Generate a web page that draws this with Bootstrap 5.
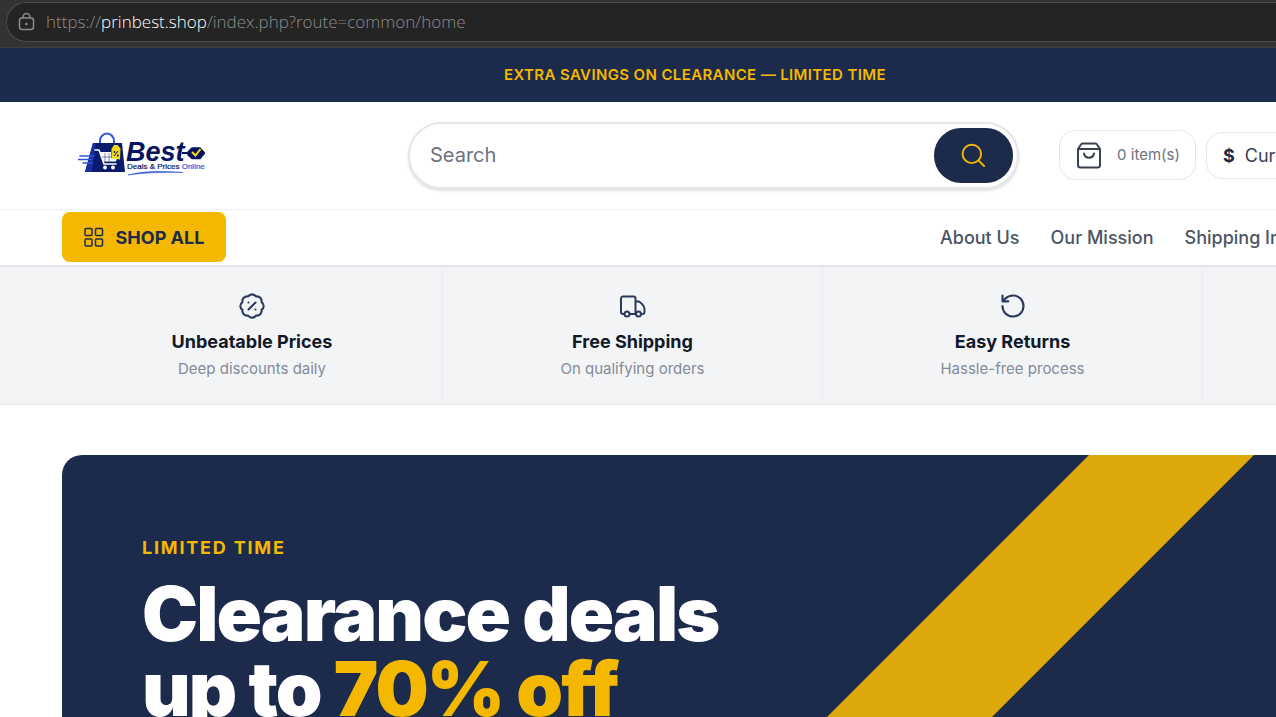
<!DOCTYPE html>
<html lang="en">
<head>
<meta charset="utf-8">
<meta name="viewport" content="width=device-width, initial-scale=1">
<title>Best Deals &amp; Prices Online</title>
<link href="https://cdn.jsdelivr.net/npm/bootstrap@5.3.0/dist/css/bootstrap.min.css" rel="stylesheet">
<style>
:root { --navy: #1c2b4b; --gold: #f5b800; --line: #e5e7eb; --gutter: 62px; }
body { font-family: Inter, "Liberation Sans", sans-serif; color: #374151; }
svg { display: block; flex: none; }
.ico { fill: none; stroke: currentColor; stroke-width: 2; stroke-linecap: round; stroke-linejoin: round; }

.browser-bar { background: #333; border-bottom: 1px solid #3f3f3f; padding: 2px 0 5px 6px; }
.address { height: 40px; background: #242424; border: 1px solid #4c4c4c; border-right: 0; border-radius: 20px 0 0 20px; padding-left: 10px; gap: 11px; color: #8c8c8c; font: 300 17px/24px "Open Sans", sans-serif; }
.address strong { font-weight: 300; color: #fff; }

.promo { background: var(--navy); color: var(--gold); font-size: 15px; font-weight: 600; line-height: 24px; letter-spacing: .025em; padding: 15px 0 15px 114px; }

.masthead { height: 108px; padding: 0 0 1px var(--gutter); border-bottom: 1px solid #f1f2f4; }
.search-box { width: calc(50% + 4px); min-width: 300px; height: 67px; border: 2px solid var(--line); border-radius: 34px; box-shadow: 0 2px 3px rgba(0,0,0,.13); padding: 4px; margin-left: 200px; margin-right: 40px; }
.search-box .form-control { font-size: 20px; color: #374151; padding: 0 16px; }
.search-box .form-control::placeholder { color: #6b7280; opacity: 1; }
.search-btn { width: 79px; background: var(--navy); color: var(--gold); border-radius: 27px; }
.pill { background: #fff; border: 1px solid var(--line); border-radius: 16px; }
.cart-btn { width: 137px; height: 50px; font-size: 15px; color: #6b7280; padding: 0 14px; gap: 12px; margin-right: 10px; }
.cart-btn svg { color: #374151; }
.currency-btn { height: 47px; font-size: 18px; color: #374151; padding: 0 16px; gap: 10px; }
.currency-btn b { color: var(--navy); }

.menu-row { height: 57px; padding: 0 0 2px var(--gutter); border-bottom: 2px solid #e4e5e8; }
.shop-btn { width: 164px; height: 50px; background: var(--gold); color: var(--navy); font-size: 18px; font-weight: 700; border-radius: 8px; gap: 10px; padding: 2px 0 0; margin-right: 714px; }
.menu-row .nav-link { color: #4b5563; font-size: 18px; font-weight: 500; padding: 0; }
.menu-row .nav { gap: 31px; padding-top: 2px; }

.benefits { background: #f3f4f6; border-bottom: 1px solid var(--line); padding-left: var(--gutter); }
.benefit { flex: 0 0 381px; height: 137px; padding-top: 25px; border-right: 1px solid #e9ebee; }
.benefit + .benefit { flex-basis: 380px; }
.benefit svg { color: #2b3a5a; margin-bottom: 8px; }
.benefit h2 { font-size: 18px; line-height: 28px; font-weight: 700; color: #111827; margin: 0; }
.benefit p { font-size: 15px; line-height: 26px; color: #858b98; margin: 0; }

.hero { background: var(--navy); margin: 50px 0 0 var(--gutter); padding: 80px 80px 0; border-radius: 20px 0 0 0; min-height: 0; }
.hero-stripe { right: 22px; width: 165px; background: #dda80a; transform: skewX(-45deg); transform-origin: top left; }
.eyebrow { color: var(--gold); font-size: 18px; line-height: 26px; font-weight: 700; letter-spacing: .1em; margin-bottom: 15px; }
.hero h1 { color: #fff; font-size: 75px; line-height: 75px; font-weight: 900; letter-spacing: -.025em; margin: 0; }
.hero h1 span { color: var(--gold); }
</style>
</head>
<body class="vh-100 overflow-hidden bg-white d-flex flex-column">
<div class="browser-bar">
  <div class="address d-flex align-items-center text-nowrap">
    <svg width="18" height="20" viewBox="0 0 18 20" fill="none" stroke="currentColor" stroke-width="1.5"><rect x="2.5" y="6" width="14" height="11.5" rx="2.5"/><path d="M6 6V5a3.5 3.5 0 0 1 7 0v1"/><circle cx="9.500" cy="12" r=".6" fill="currentColor"/></svg>
    <div>https://<strong>prinbest.shop</strong>/index.php?route=common/home</div>
  </div>
</div>

<div class="promo text-center text-nowrap">EXTRA SAVINGS ON CLEARANCE — LIMITED TIME</div>

<header class="masthead d-flex align-items-center text-nowrap overflow-hidden flex-shrink-0">
  <a href="#" class="ms-3 flex-shrink-0" aria-label="Best Deals and Prices Online">
    <svg width="130" height="46" viewBox="0 0 130 46">
      <path d="M22 13V9a7 7.500 0 0 1 14 0v6" fill="none" stroke="#3158dc" stroke-width="2"/>
      <path d="M15 11h29l3 29H7z" fill="#0a1a6c"/>
      <path d="M15 11h3l-4 29H7z" fill="#15309e"/>
      <path d="M2 24h14M0 27.500h14M5 31h9" stroke="#2d56d8" stroke-width="1.500" stroke-linecap="round"/>
      <path d="M17 18h4l5 14h12" fill="none" stroke="#fff" stroke-width="1.600" stroke-linecap="round" stroke-linejoin="round"/>
      <path d="M22 20h11v6h6l-1 3.500H25z" fill="#fff"/>
      <path d="M27 21v8M31 21v8M24 25h9" stroke="#0a1a6c" stroke-width=".5"/>
      <circle cx="27" cy="35.500" r="1.900" fill="#fff"/><circle cx="35" cy="35.500" r="1.900" fill="#fff"/>
      <path d="M33.500 17l2.500-4h3.500l3 3.500-.5 11-8.500-1z" fill="#f5dc12"/>
      <path d="M36 24l4-5" stroke="#0a1a6c"/><circle cx="36.500" cy="20" r="1" fill="#0a1a6c"/><circle cx="39.800" cy="23.500" r="1" fill="#0a1a6c"/>
      <text x="48" y="29" font-family="Liberation Sans, sans-serif" font-size="27" font-weight="700" font-style="italic" fill="#07145f">Best</text>
      <path d="M104 21h8" stroke="#07145f" stroke-width="2"/>
      <path d="M110 20l4-4h8l4.500 5-4.500 5.500h-8l-4-3.500z" fill="#07145f" stroke="#07145f" stroke-width="1.500" stroke-linejoin="round"/>
      <path d="M114 20l3.500 3.500 5-6.500" fill="none" stroke="#f5dc12" stroke-width="2"/>
      <text x="49" y="37" font-family="Liberation Sans, sans-serif" font-size="8" fill="#07145f" stroke="#07145f" stroke-width=".2">Deals &amp; Prices <tspan fill="#3158dc" stroke="#3158dc">Online</tspan></text>
      <path d="M50 43c16-4.500 36-4 55-2.500-20-.5-38 0-55 2.500z" fill="#2d56d8" stroke="#2d56d8" stroke-width=".6"/>
    </svg>
  </a>
  <form class="search-box d-flex flex-shrink-0 bg-white">
    <label class="visually-hidden" for="q">Search products</label>
    <input id="q" type="text" class="form-control border-0 shadow-none bg-transparent" placeholder="Search">
    <button type="button" class="search-btn btn border-0 flex-shrink-0 p-0 d-flex align-items-center justify-content-center" aria-label="Search">
      <svg class="ico" width="26" height="26" viewBox="0 0 24 24"><g stroke-width="1.800"><circle cx="10" cy="11" r="8.500"/><path d="M16.300 17.200l5 5"/></g></svg>
    </button>
  </form>
  <button type="button" class="btn pill cart-btn d-flex align-items-center justify-content-center flex-shrink-0">
    <svg class="ico" width="30" height="30" viewBox="0 0 30 30"><path d="M3 9v16a2.500 2.500 0 0 0 2.500 2.500h17A2.500 2.500 0 0 0 25 25V9zM3 9l3-4.500a2 2 0 0 1 1.500-1h13a2 2 0 0 1 1.500 1L25 9M9 13.500c1 5.500 9 5.500 10 0"/></svg>
    <span>0 item(s)</span>
  </button>
  <button type="button" class="btn pill currency-btn d-flex align-items-center flex-shrink-0"><b>$</b><span>Currency</span></button>
</header>

<nav class="menu-row d-flex align-items-center text-nowrap overflow-hidden flex-shrink-0" aria-label="Main">
  <button type="button" class="btn shop-btn d-flex align-items-center justify-content-center flex-shrink-0">
    <svg class="ico" width="22" height="22" viewBox="0 0 22 22"><g stroke-width="1.500"><rect x="1" y="1.500" width="7" height="7" rx="1"/><rect x="11.500" y="1.500" width="7" height="7" rx="1"/><rect x="1" y="12" width="7" height="7" rx="1"/><rect x="11.500" y="12" width="7" height="7" rx="1"/></g></svg>
    <span>SHOP ALL</span>
  </button>
  <div class="nav flex-nowrap">
    <a class="nav-link" href="#">About Us</a>
    <a class="nav-link" href="#">Our Mission</a>
    <a class="nav-link" href="#">Shipping Info</a>
  </div>
</nav>

<section class="benefits d-flex overflow-hidden text-nowrap flex-shrink-0">
  <div class="benefit d-flex flex-column align-items-center">
    <svg class="ico" width="28" height="28" viewBox="0 0 24 24"><path stroke-width="1.800" d="M3.850 8.620a4 4 0 0 1 4.780-4.770 4 4 0 0 1 6.740 0 4 4 0 0 1 4.780 4.780 4 4 0 0 1 0 6.740 4 4 0 0 1-4.770 4.780 4 4 0 0 1-6.750 0 4 4 0 0 1-4.780-4.770 4 4 0 0 1 0-6.760zM15 9l-6 6M9 9h.01M15 15h.01"/></svg>
    <h2>Unbeatable Prices</h2>
    <p>Deep discounts daily</p>
  </div>
  <div class="benefit d-flex flex-column align-items-center">
    <svg class="ico" width="28" height="28" viewBox="0 0 28 28"><path d="M5.500 22H4a2 2 0 0 1-2-2V6.500a2 2 0 0 1 2-2h10.500a2 2 0 0 1 2 2V22H11M16.500 9.500h3.500c3 2 5.500 5 5.500 8V20a2 2 0 0 1-2 2"/><circle cx="8" cy="22" r="2.500"/><circle cx="19.500" cy="22" r="2.500"/></svg>
    <h2>Free Shipping</h2>
    <p>On qualifying orders</p>
  </div>
  <div class="benefit d-flex flex-column align-items-center">
    <svg class="ico" width="28" height="28" viewBox="0 0 24 24"><path stroke-width="1.800" d="M3 12a9 9 0 1 0 9-9 9.750 9.750 0 0 0-6.740 2.740L3 8M3 3v5h5"/></svg>
    <h2>Easy Returns</h2>
    <p>Hassle-free process</p>
  </div>
</section>

<main class="hero position-relative overflow-hidden flex-fill">
  <div class="hero-stripe position-absolute top-0 bottom-0"></div>
  <div class="position-relative text-nowrap">
    <div class="eyebrow">LIMITED TIME</div>
    <h1>Clearance deals<br>up to <span>70% off</span></h1>
  </div>
</main>
<script src="https://cdn.jsdelivr.net/npm/bootstrap@5.3.0/dist/js/bootstrap.bundle.min.js"></script>
</body>
</html>
